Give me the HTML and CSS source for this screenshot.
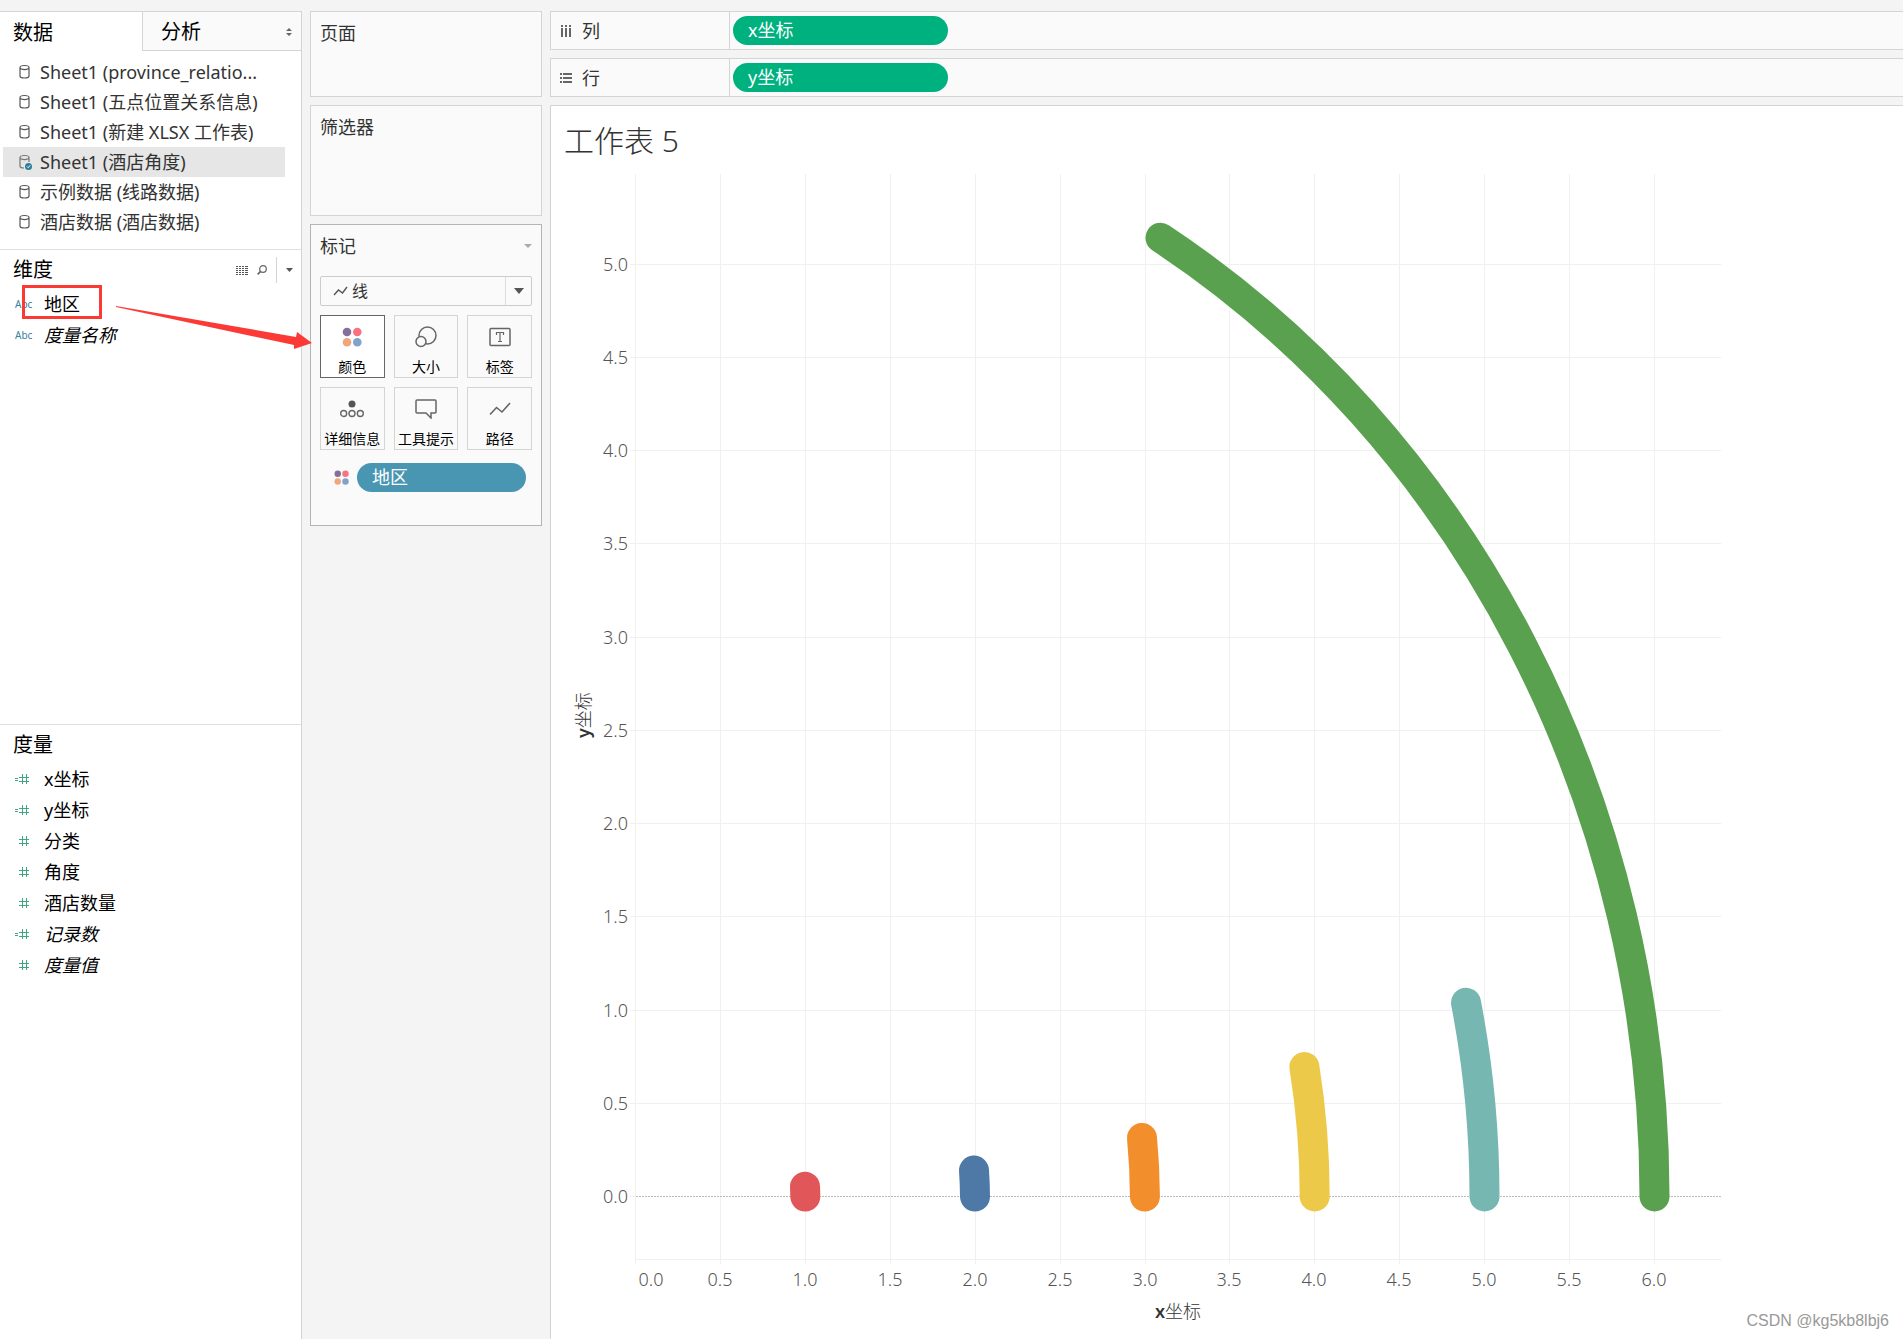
FILE: index.html
```html
<!DOCTYPE html>
<html lang="zh-CN">
<head>
<meta charset="utf-8">
<meta name="viewport" content="width=device-width, initial-scale=1">
<title>工作表 5</title>
<link rel="stylesheet" href="styles.css">
</head>
<body>
<svg class="defs" aria-hidden="true">
  <symbol id="db" viewBox="0 0 14 16"><path d="M2 3.5v8.500c0 1.500 2 2 4.500 2s4.500-.5 4.500-2V3.500M2 3.500c0-2.700 9-2.700 9 0s-9 2.700-9 0z" fill="none" stroke="#555" stroke-width="1.200"/></symbol>
  <symbol id="db-active" viewBox="0 0 14 16"><path d="M6 14c-2.500 0-4-.5-4-2V3.500c0-2.700 9-2.700 9 0s-9 2.700-9 0M11 3.500V8" fill="none" stroke="#777" stroke-width="1.200"/><circle cx="10.500" cy="12.500" r="3.500" fill="#2f7d9b"/><path d="M9 12.500l1.200 1.200 2-2.400" fill="none" stroke="#fff"/></symbol>
  <symbol id="num" viewBox="0 0 16 12"><path d="M7.500 1v10M11.500 1v10M4 4.500h10M4 8.500h10" fill="none" stroke="#3fa582"/></symbol>
  <symbol id="calc" viewBox="0 0 16 12"><path d="M7.500 1v10M11.500 1v10M4 4.500h10M4 8.500h10M0 5.500h3M0 7.500h3" fill="none" stroke="#3fa582"/></symbol>
  <symbol id="dots" viewBox="0 0 20 20"><circle cx="5" cy="5" r="4.300" fill="#856f98"/><circle cx="15.300" cy="5" r="4.300" fill="#f8727f"/><circle cx="5" cy="15.300" r="4.300" fill="#f2a67c"/><circle cx="15.300" cy="15.300" r="4.300" fill="#7fa4cb"/></symbol>
  <symbol id="line" viewBox="0 0 22 14"><path d="M1 12.500l6.500-7 5.500 4.500L21 1" fill="none" stroke="#666" stroke-width="1.600"/></symbol>
</svg>
<div class="app">
  <aside class="side">
    <div class="tabs">
      <button class="tab tab-on" type="button">数据</button>
      <button class="tab tab-off" type="button">分析
        <svg class="sorter" width="6" height="8" viewBox="0 0 6 8"><path d="M3 0l3 3H0zM3 8l3-3H0z" fill="#666"/></svg>
      </button>
    </div>
    <ul class="sources">
      <li><svg class="db"><use href="#db"/></svg>Sheet1 (province_relatio...</li>
      <li><svg class="db"><use href="#db"/></svg>Sheet1 (五点位置关系信息)</li>
      <li><svg class="db"><use href="#db"/></svg>Sheet1 (新建 XLSX 工作表)</li>
      <li class="on"><svg class="db"><use href="#db-active"/></svg>Sheet1 (酒店角度)</li>
      <li><svg class="db"><use href="#db"/></svg>示例数据 (线路数据)</li>
      <li><svg class="db"><use href="#db"/></svg>酒店数据 (酒店数据)</li>
    </ul>
    <section class="dims">
      <header class="sec-head">
        <h2>维度</h2>
        <div class="tools">
          <button type="button" aria-label="查看数据"><svg width="12" height="9" viewBox="0 0 12 9"><path d="M0 .5h12M0 2.500h12M0 4.500h12M0 6.500h12M0 8.500h12" stroke="#555" stroke-dasharray="2 1 2 1 2 1 3 1"/></svg></button>
          <button type="button" aria-label="查找"><svg width="10" height="10" viewBox="0 0 10 10"><circle cx="6" cy="4" r="3.300" fill="none" stroke="#666" stroke-width="1.200"/><path d="M3.600 6.400L.6 9.400" stroke="#666" stroke-width="1.600"/></svg></button>
          <button class="split" type="button" aria-label="菜单"><svg width="7" height="4" viewBox="0 0 7 4"><path d="M0 0h7L3.500 4z" fill="#555"/></svg></button>
        </div>
      </header>
      <ul class="fields">
        <li><span class="abc">Abc</span>地区</li>
        <li><span class="abc">Abc</span><em>度量名称</em></li>
      </ul>
      <svg class="note" width="302" height="74" viewBox="0 0 302 74" aria-hidden="true">
        <rect x="13.500" y="2.500" width="77" height="31" fill="none" stroke="#fb3a36" stroke-width="3"/>
        <path d="M106 22L286 53l1-5 15 11-18 6v-4L106 23z" fill="#fb3a36"/>
      </svg>
    </section>
    <section class="meas">
      <header class="sec-head"><h2>度量</h2></header>
      <ul class="fields">
        <li><svg class="num"><use href="#calc"/></svg>x坐标</li>
        <li><svg class="num"><use href="#calc"/></svg>y坐标</li>
        <li><svg class="num"><use href="#num"/></svg>分类</li>
        <li><svg class="num"><use href="#num"/></svg>角度</li>
        <li><svg class="num"><use href="#num"/></svg>酒店数量</li>
        <li><svg class="num"><use href="#calc"/></svg><em>记录数</em></li>
        <li><svg class="num"><use href="#num"/></svg><em>度量值</em></li>
      </ul>
    </section>
  </aside>

  <div class="cards">
    <section class="card pages"><h3>页面</h3></section>
    <section class="card filters"><h3>筛选器</h3></section>
    <section class="card marks">
      <header class="marks-head"><h3>标记</h3><svg width="8" height="4" viewBox="0 0 8 4"><path d="M0 0h8L4 4z" fill="#aaa"/></svg></header>
      <div class="pick">
        <svg width="15" height="10" viewBox="0 0 15 10"><path d="M1 9l4.500-5 4 3L14 1" fill="none" stroke="#555" stroke-width="1.400"/></svg>
        <select aria-label="标记类型"><option>线</option></select>
        <span class="pick-arrow"><svg width="10" height="6" viewBox="0 0 10 6"><path d="M0 0h10L5 6z" fill="#555"/></svg></span>
      </div>
      <div class="grid">
        <button class="mark mark-on" type="button"><svg width="20" height="20"><use href="#dots"/></svg>颜色</button>
        <button class="mark" type="button"><svg width="22" height="22" viewBox="0 0 22 22" fill="#fafafa" stroke="#666" stroke-width="1.500"><circle cx="12.500" cy="9.500" r="8.500"/><circle cx="6" cy="15.500" r="5"/></svg>大小</button>
        <button class="mark" type="button"><svg width="22" height="20" viewBox="0 0 22 20"><rect x="1" y="1.500" width="20" height="17" rx="1" fill="none" stroke="#666" stroke-width="1.500"/><path d="M7.500 8V5.500h7V8M11 5.500v9M9 14.500h4" fill="none" stroke="#666" stroke-width="1.200"/></svg>标签</button>
        <button class="mark" type="button"><svg width="24" height="18" viewBox="0 0 24 18"><circle cx="12" cy="4" r="3.500" fill="#555"/><g fill="none" stroke="#666" stroke-width="1.400"><circle cx="3.700" cy="13.500" r="3"/><circle cx="12" cy="13.500" r="3"/><circle cx="20.300" cy="13.500" r="3"/></g></svg>详细信息</button>
        <button class="mark" type="button"><svg width="22" height="20" viewBox="0 0 22 20"><path d="M2 1h18q1 0 1 1v11q0 1-1 1h-4v5l-5-5H2q-1 0-1-1V2q0-1 1-1z" fill="none" stroke="#666" stroke-width="1.500"/></svg>工具提示</button>
        <button class="mark" type="button"><svg width="22" height="14"><use href="#line"/></svg>路径</button>
      </div>
      <div class="enc"><svg width="15" height="15" viewBox="0 0 20 20"><use href="#dots" width="20" height="20"/></svg><span class="pill pill-dim">地区</span></div>
    </section>
  </div>

  <main class="main">
    <section class="shelf">
      <h3><svg width="12" height="12" viewBox="0 0 12 12"><path d="M2 0v2M6 0v2M10 0v2M2 3v9M6 3v9M10 3v9" stroke="#666" stroke-width="2"/></svg>列</h3>
      <div class="drop"><span class="pill">x坐标</span></div>
    </section>
    <section class="shelf">
      <h3><svg width="12" height="10" viewBox="0 0 12 10"><path d="M0 1h2M3 1h9M0 5h2M3 5h9M0 9h2M3 9h9" stroke="#666" stroke-width="2"/></svg>行</h3>
      <div class="drop"><span class="pill">y坐标</span></div>
    </section>
    <section class="sheet">
      <h1>工作表 5</h1>
      <svg class="chart" viewBox="-1 0 1352 1165" role="img" aria-label="y坐标 / x坐标">
        <path class="grid-line" d="M83.500 0V1090M168.500 0V1090M253.500 0V1090M338.500 0V1090M423.500 0V1090M508.500 0V1090M593.500 0V1090M677.500 0V1090M762.500 0V1090M847.500 0V1090M932.500 0V1090M1017.500 0V1090M1102.500 0V1090"/>
        <path class="grid-line" d="M78 90.500H1169M78 183.500H1169M78 276.500H1169M78 369.500H1169M78 463.500H1169M78 556.500H1169M78 649.500H1169M78 742.500H1169M78 836.500H1169M78 929.500H1169M78 1022.500H84M83 1085.500H1169"/>
        <path class="zero-line" d="M84 1022.500H1169"/>
        <g class="arcs">
          <path stroke="#e15659" d="M253.300 1022.500A170 186 0 0 0 253 1012.700"/>
          <path stroke="#4e79a7" d="M423 1022.500A340 373 0 0 0 422 996.500"/>
          <path stroke="#f28e2c" d="M592.900 1022.500A509 559 0 0 0 590 964"/>
          <path stroke="#edc949" d="M762.700 1022.500A679 746 0 0 0 752.400 893"/>
          <path stroke="#76b7b2" d="M932.500 1022.500A849 932 0 0 0 914 828.700"/>
          <path stroke="#59a14f" d="M1102.500 1022.500A1019 1118.400 0 0 0 608.500 63.800"/>
        </g>
        <g class="ylab">
          <text x="76" y="97">5.0</text><text x="76" y="190">4.5</text><text x="76" y="283">4.0</text><text x="76" y="376">3.5</text><text x="76" y="470">3.0</text><text x="76" y="563">2.5</text><text x="76" y="656">2.0</text><text x="76" y="749">1.5</text><text x="76" y="843">1.0</text><text x="76" y="936">0.5</text><text x="76" y="1029">0.0</text>
        </g>
        <g class="xlab">
          <text x="99" y="1112">0.0</text><text x="168" y="1112">0.5</text><text x="253" y="1112">1.0</text><text x="338" y="1112">1.5</text><text x="423" y="1112">2.0</text><text x="508" y="1112">2.5</text><text x="593" y="1112">3.0</text><text x="677" y="1112">3.5</text><text x="762" y="1112">4.0</text><text x="847" y="1112">4.5</text><text x="932" y="1112">5.0</text><text x="1017" y="1112">5.5</text><text x="1102" y="1112">6.0</text>
        </g>
        <text class="axis" x="603" y="1144"><tspan class="bold">x</tspan>坐标</text>
        <text class="axis" transform="translate(38 564) rotate(-90)"><tspan class="bold">y</tspan>坐标</text>
      </svg>
      <span class="mark-text">CSDN @kg5kb8lbj6</span>
    </section>
  </main>
</div>
</body>
</html>
```

FILE: styles.css
```css
* { box-sizing: border-box; }
body {
  margin: 0;
  background: #f4f4f4;
  color: #333;
  font: 18px/24px "Noto Sans", "Noto Sans CJK SC", sans-serif;
}
h1, h2, h3, ul { margin: 0; padding: 0; font-weight: 400; }
ul { list-style: none; }
button { font: inherit; color: #000; background: none; border: 0; padding: 0; }
svg { flex: none; display: block; }
.defs { position: absolute; width: 0; height: 0; }

.app { display: flex; gap: 8px; min-height: 100vh; padding-top: 11px; }

/* data pane */
.side {
  flex: none;
  width: 302px;
  display: flex;
  flex-direction: column;
  background: #fff;
  border: 1px solid #d4d4d4;
  border-width: 1px 1px 0 0;
}
.tabs { display: flex; height: 39px; font-size: 20px; }
.tab { padding-top: 2px; text-align: left; }
.tab-on { width: 142px; padding-left: 13px; }
.tab-off {
  flex: 1;
  display: flex;
  align-items: center;
  justify-content: space-between;
  padding: 2px 9px 0 18px;
  background: #fafafa;
  border: 1px solid #d4d4d4;
  border-width: 0 0 1px 1px;
}
.sources { height: 198px; padding: 6px 16px 0 3px; font-size: 18px; }
.sources li {
  display: flex;
  align-items: center;
  gap: 7px;
  height: 30px;
  padding-left: 14px;
  white-space: nowrap;
}
.sources .on { background: #e6e6e6; }
.sources .db { width: 16px; height: 16px; }
.sec-head { display: flex; justify-content: space-between; padding: 6px 0 0 13px; }
.sec-head h2 { color: #000; font-size: 20px; line-height: 28px; }
.dims { position: relative; height: 475px; border-top: 1px solid #e0e0e0; }
.meas { border-top: 1px solid #e0e0e0; }
.tools { display: flex; align-items: center; gap: 9px; padding-right: 8px; }
.tools .split { height: 26px; padding-left: 9px; border-left: 1px solid #d4d4d4; }
.fields { padding-top: 4px; color: #000; }
.fields li { display: flex; align-items: center; height: 31px; padding-left: 15px; }
.abc { width: 29px; color: #39809c; font-size: 10px; }
.num { width: 16px; height: 12px; margin-right: 13px; }
.note { position: absolute; left: 10px; top: 34px; overflow: visible; }

/* cards */
.cards { flex: none; width: 232px; display: flex; flex-direction: column; gap: 8px; }
.card { padding: 9px; background: #fafafa; border: 1px solid #d4d4d4; }
.card h3 { font-size: 18px; }
.pages { height: 86px; }
.filters { height: 111px; }
.marks { height: 302px; border-color: #b4b4b4; }
.marks-head { display: flex; align-items: center; justify-content: space-between; }
.pick {
  display: flex;
  align-items: center;
  height: 30px;
  margin-top: 18px;
  padding-left: 12px;
  border: 1px solid #ccc;
  border-radius: 2px;
}
.pick select {
  flex: 1;
  appearance: none;
  padding: 0 4px;
  border: 0;
  background: none;
  color: #333;
  font: inherit;
  font-size: 16px;
}
.pick-arrow {
  display: flex;
  align-items: center;
  justify-content: center;
  width: 26px;
  height: 28px;
  border-left: 1px solid #ddd;
}
.grid { display: grid; grid-template-columns: repeat(3, 1fr); gap: 9px; margin-top: 9px; }
.mark {
  display: grid;
  grid-template-rows: 42px 18px;
  place-items: center;
  height: 63px;
  border: 1px solid #d4d4d4;
  font-size: 14px;
  line-height: 18px;
  white-space: nowrap;
}
.mark-on { background: #fff; border-color: #666; }
.enc { display: flex; align-items: center; gap: 8px; padding: 13px 6px 0 14px; }

.pill {
  display: block;
  width: 215px;
  height: 29px;
  padding: 0 15px;
  border-radius: 15px;
  background: #00b180;
  color: #fff;
  line-height: 29px;
}
.pill-dim { flex: 1; background: #4996b2; }

/* shelves and sheet */
.main { flex: 1; min-width: 0; display: flex; flex-direction: column; gap: 8px; }
.shelf {
  display: flex;
  height: 39px;
  background: #fafafa;
  border: 1px solid #d4d4d4;
  border-right: 0;
}
.shelf h3 {
  display: flex;
  align-items: center;
  gap: 10px;
  width: 179px;
  padding-left: 9px;
  border-right: 1px solid #d4d4d4;
  font-size: 18px;
}
.drop { padding: 4px 3px; }
.sheet {
  position: relative;
  flex: 1;
  background: #fff;
  border: 1px solid #d4d4d4;
  border-width: 1px 0 0 1px;
}
.sheet h1 {
  height: 68px;
  padding: 14px 13px 0;
  font-size: 30px;
  font-weight: 300;
  line-height: 42px;
}
.chart { width: 100%; height: auto; font-size: 18px; }
.grid-line { fill: none; stroke: #f0f0f0; }
.zero-line { fill: none; stroke: #bbb; stroke-dasharray: 2 1; }
.arcs { fill: none; stroke-width: 30; stroke-linecap: round; }
.xlab, .ylab { fill: #555; font-weight: 300; }
.xlab { text-anchor: middle; }
.ylab { text-anchor: end; }
.axis { fill: #333; font-weight: 300; }
.bold { font-weight: 600; }
.mark-text {
  position: absolute;
  right: 14px;
  bottom: 6px;
  color: #999;
  font-family: "Liberation Sans", sans-serif;
  font-size: 16px;
}
```
